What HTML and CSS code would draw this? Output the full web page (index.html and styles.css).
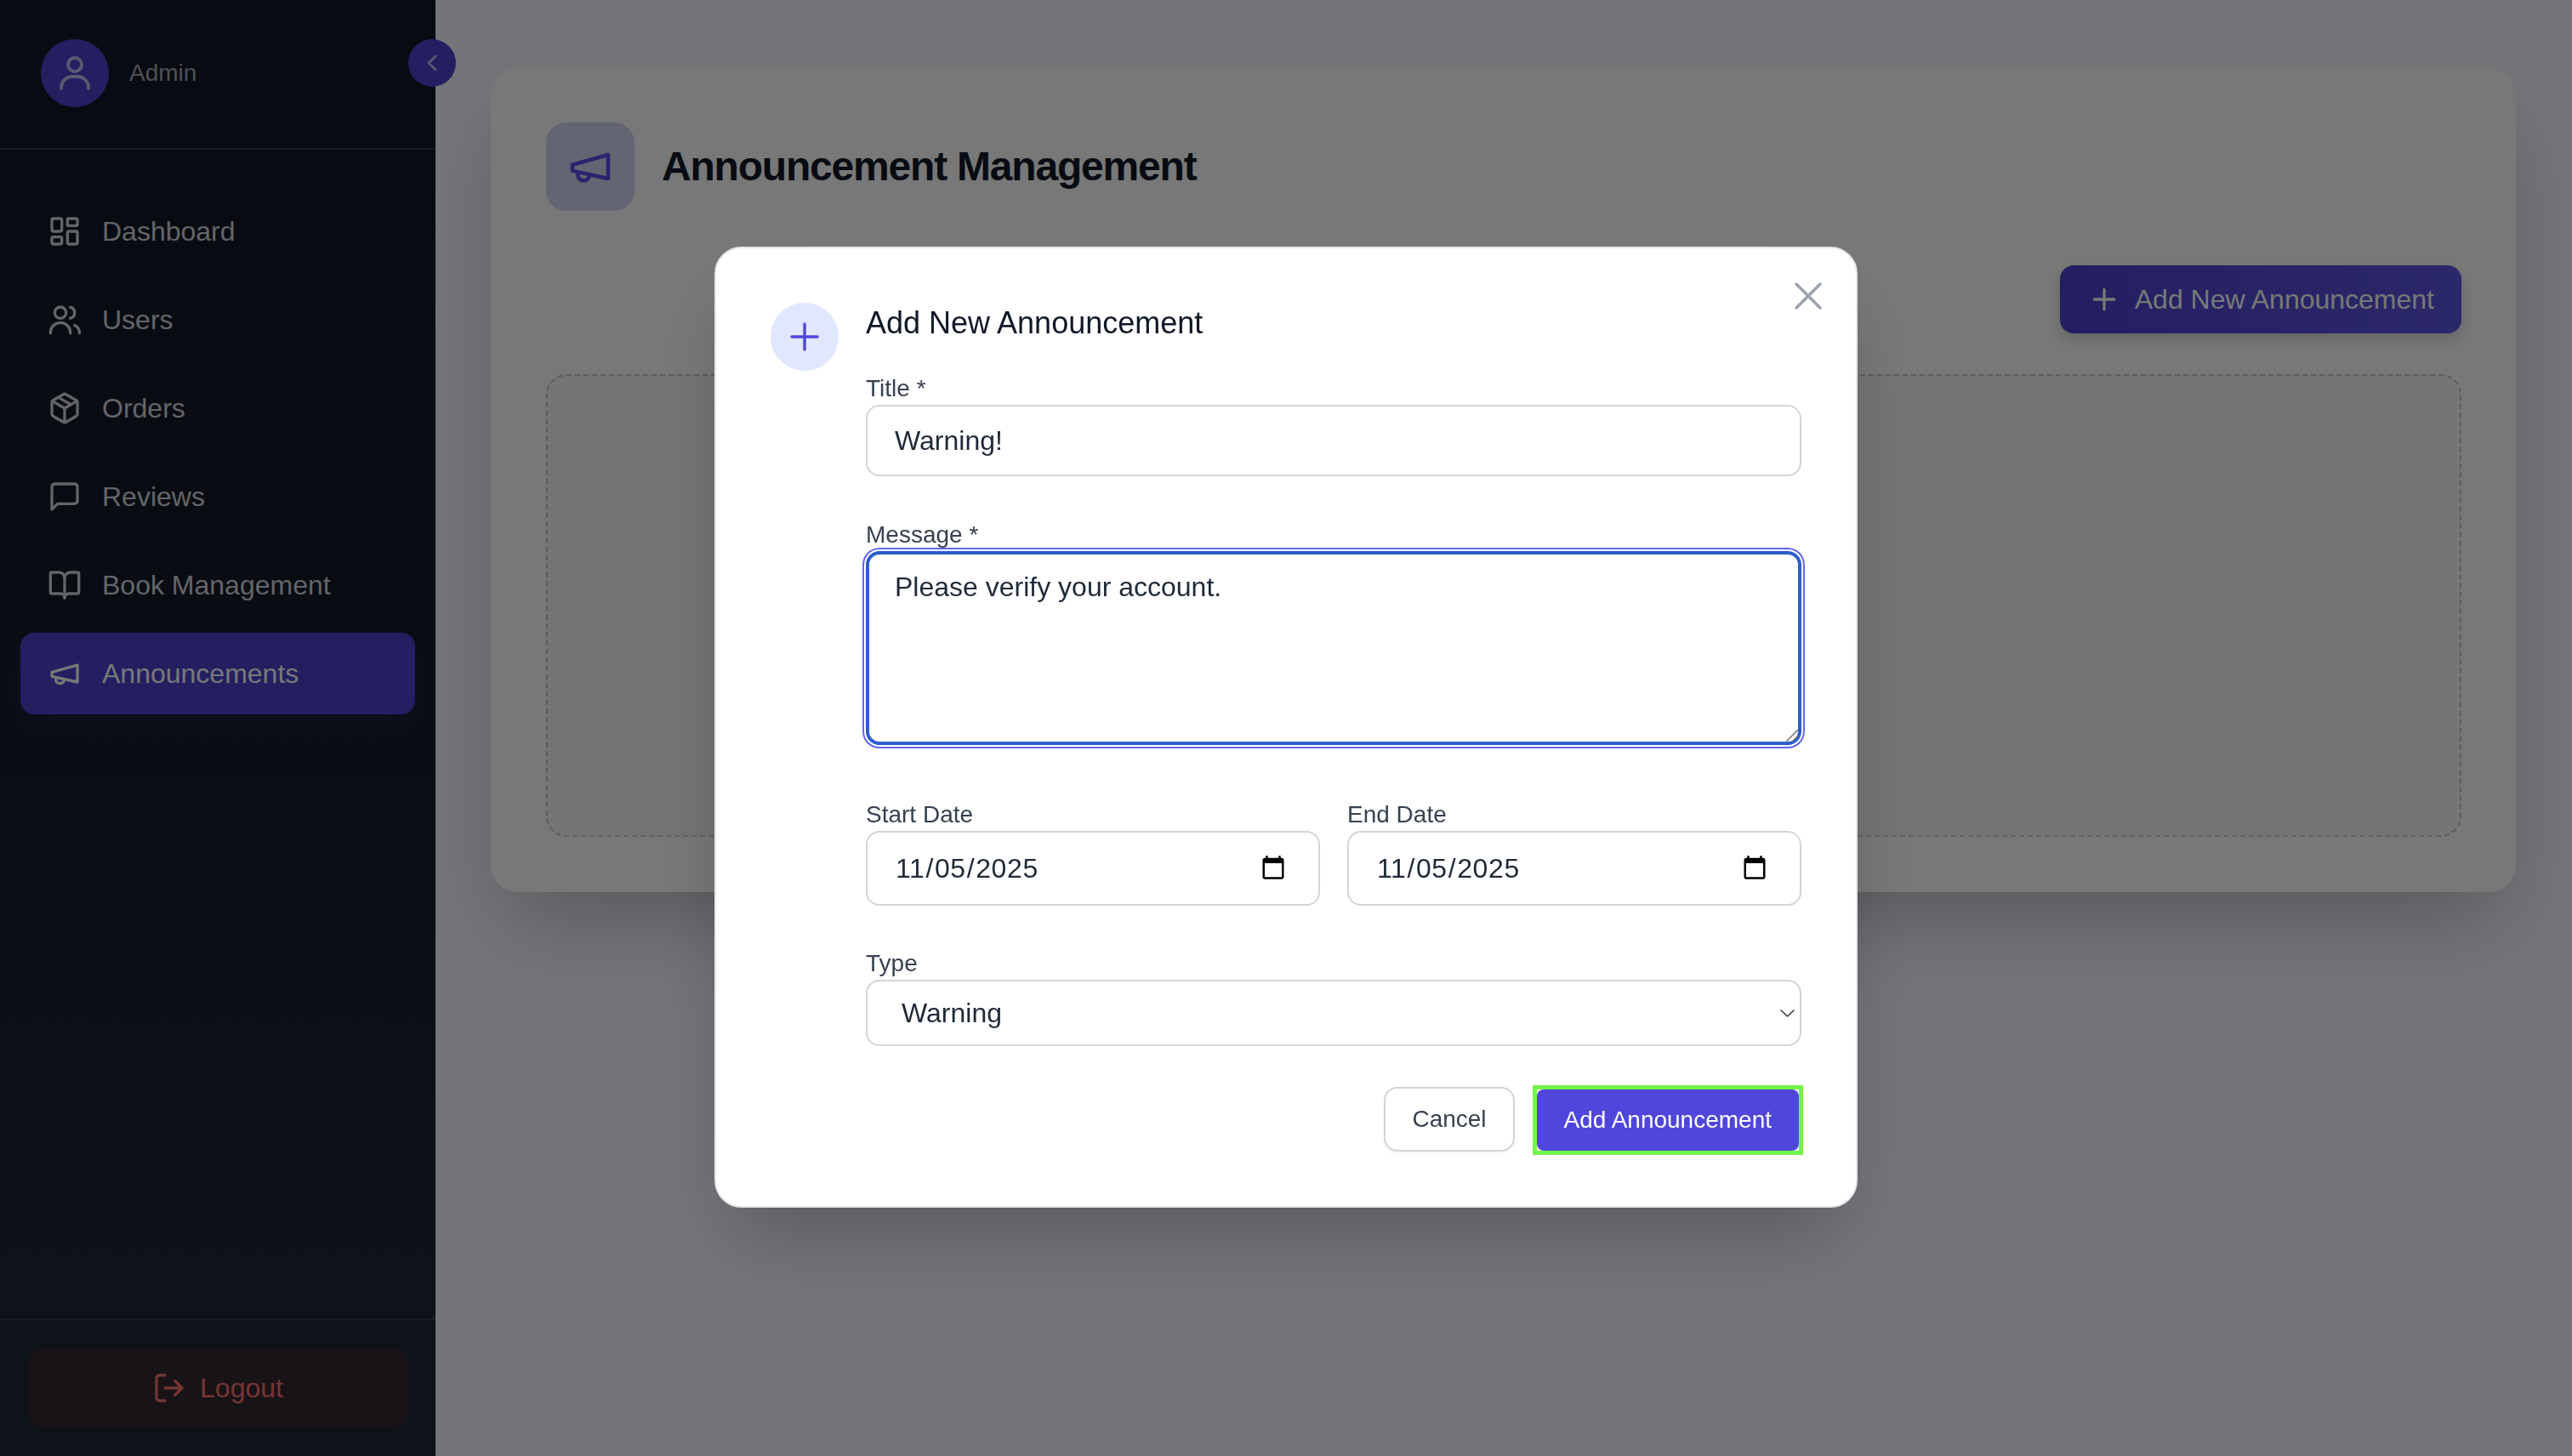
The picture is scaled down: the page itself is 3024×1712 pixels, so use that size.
FILE: index.html
```html
<!DOCTYPE html>
<html lang="en">
<head>
    <meta charset="UTF-8">
    <title>Announcement Management</title>
    <link rel="stylesheet" href="styles.css">
</head>
<body>
    <div class="app">
        <aside class="sidebar">
            <div class="sidebar-head">
                <div class="avatar">
                    <svg class="icon-avatar" viewBox="0 0 24 24"><circle cx="12" cy="7" r="4"/><path d="M4 21v-.5a6.5 6.5 0 0 1 6.5-6.5h3a6.5 6.5 0 0 1 6.5 6.5v.5"/></svg>
                </div>
                <span class="admin-name">Admin</span>
            </div>
            <button class="toggle">
                <svg class="icon-chevron" viewBox="0 0 24 24"><path d="m15 18-6-6 6-6"/></svg>
            </button>
            <nav class="nav">
                <a class="nav-item">
                    <svg class="icon" viewBox="0 0 24 24"><rect x="3" y="3" width="7" height="9" rx="1"/><rect x="14" y="3" width="7" height="5" rx="1"/><rect x="14" y="12" width="7" height="9" rx="1"/><rect x="3" y="16" width="7" height="5" rx="1"/></svg>
                    Dashboard
                </a>
                <a class="nav-item">
                    <svg class="icon" viewBox="0 0 24 24"><circle cx="9" cy="7" r="4"/><path d="M2 21.5V21a7 7 0 0 1 14 0v.5"/><path d="M16 3.13a4 4 0 0 1 0 7.75"/><path d="M22.5 21.5c0-2.500-1.500-4.700-3.500-5.600"/></svg>
                    Users
                </a>
                <a class="nav-item">
                    <svg class="icon" viewBox="0 0 24 24"><path d="m7.500 4.270 9 5.150"/><path d="M21 8a2 2 0 0 0-1-1.730l-7-4a2 2 0 0 0-2 0l-7 4A2 2 0 0 0 3 8v8a2 2 0 0 0 1 1.730l7 4a2 2 0 0 0 2 0l7-4A2 2 0 0 0 21 16Z"/><path d="m3.300 7 8.700 5 8.700-5"/><path d="M12 22V12"/></svg>
                    Orders
                </a>
                <a class="nav-item">
                    <svg class="icon" viewBox="0 0 24 24"><path d="M21 15a2 2 0 0 1-2 2H7l-4 4V5a2 2 0 0 1 2-2h14a2 2 0 0 1 2 2z"/></svg>
                    Reviews
                </a>
                <a class="nav-item">
                    <svg class="icon" viewBox="0 0 24 24"><path d="M12 7v14"/><path d="M3 18a1 1 0 0 1-1-1V4a1 1 0 0 1 1-1h5a4 4 0 0 1 4 4 4 4 0 0 1 4-4h5a1 1 0 0 1 1 1v13a1 1 0 0 1-1 1h-6a3 3 0 0 0-3 3 3 3 0 0 0-3-3z"/></svg>
                    Book Management
                </a>
                <a class="nav-item active">
                    <svg class="icon" viewBox="0 0 24 24"><path d="m3 11 18-5v12L3 14v-3z"/><path d="M11.600 16.800a3 3 0 1 1-5.800-1.600"/></svg>
                    Announcements
                </a>
            </nav>
            <div class="sidebar-foot">
                <button class="logout">
                    <svg class="icon" viewBox="0 0 24 24"><path d="M9 21H5a2 2 0 0 1-2-2V5a2 2 0 0 1 2-2h4"/><path d="m16 17 5-5-5-5"/><path d="M21 12H9"/></svg>
                    Logout
                </button>
            </div>
        </aside>

        <main class="main">
            <section class="panel">
                <div class="panel-head">
                    <div class="panel-icon">
                        <svg class="icon-large" viewBox="0 0 24 24"><path d="m3 11 18-5v12L3 14v-3z"/><path d="M11.600 16.800a3 3 0 1 1-5.800-1.600"/></svg>
                    </div>
                    <h1>Announcement Management</h1>
                </div>
                <div class="panel-actions">
                    <button class="add-button">
                        <svg class="icon" viewBox="0 0 24 24"><path d="M5 12h14"/><path d="M12 5v14"/></svg>
                        Add New Announcement
                    </button>
                </div>
                <div class="empty-box"></div>
            </section>
        </main>
    </div>

    <div class="overlay">
        <div class="modal">
            <button class="close">
                <svg class="icon-close" viewBox="0 0 24 24"><path d="M6 18 18 6"/><path d="m6 6 12 12"/></svg>
            </button>
            <div class="modal-head">
                <div class="modal-icon">
                    <svg class="icon-plus" viewBox="0 0 24 24"><path d="M12 4.500v15"/><path d="M19.500 12h-15"/></svg>
                </div>
                <h2>Add New Announcement</h2>
            </div>
            <form class="form">
                <div class="field">
                    <label for="title">Title *</label>
                    <input class="control" id="title" type="text" value="Warning!">
                </div>
                <div class="field field-message">
                    <label for="message">Message *</label>
                    <div class="message-wrap">
                        <textarea class="control message" id="message" rows="4">Please verify your account.</textarea>
                        <svg class="resize-grip" viewBox="0 0 14 14"><path d="M0 14 14 0"/><path d="M7 14l7-7"/></svg>
                    </div>
                </div>
                <div class="date-row">
                    <div class="field">
                        <label for="start">Start Date</label>
                        <input class="control date" id="start" type="date" value="2025-11-05">
                    </div>
                    <div class="field">
                        <label for="end">End Date</label>
                        <input class="control date" id="end" type="date" value="2025-11-05">
                    </div>
                </div>
                <div class="field">
                    <label for="type">Type</label>
                    <div class="select-wrap">
                        <select class="control select" id="type">
                            <option>Warning</option>
                        </select>
                        <svg class="select-arrow" viewBox="0 0 17 9"><path d="M1 1l7.500 7L16 1"/></svg>
                    </div>
                </div>
                <div class="form-actions">
                    <button class="cancel" type="button">Cancel</button>
                    <div class="submit-frame">
                        <button class="submit" type="button">Add Announcement</button>
                    </div>
                </div>
            </form>
        </div>
    </div>
</body>
</html>
```

FILE: styles.css
```css
/* Base */
* {
    box-sizing: border-box;
}

body {
    margin: 0;
    height: 1712px;
    overflow: hidden;
    font-family: "Liberation Sans", Arial, sans-serif;
    background-color: #f6f8ff;
    color: #111827;
}

button {
    font-family: inherit;
    border: none;
    cursor: pointer;
}

svg {
    fill: none;
    stroke: currentColor;
    stroke-width: 2;
    stroke-linecap: round;
    stroke-linejoin: round;
    flex-shrink: 0;
}

.icon {
    width: 40px;
    height: 40px;
}

.app {
    display: flex;
    height: 1712px;
}

/* Sidebar */
.sidebar {
    position: relative;
    display: flex;
    flex-direction: column;
    width: 512px;
    flex-shrink: 0;
    background: linear-gradient(to bottom, #141828, #171c2a 50%, #212b3a);
}

.sidebar-head {
    display: flex;
    align-items: center;
    gap: 24px;
    height: 176px;
    padding: 0 48px 2px;
    border-bottom: 2px solid #32384a;
}

.avatar {
    display: flex;
    align-items: center;
    justify-content: center;
    width: 80px;
    height: 80px;
    border-radius: 50%;
    background-color: #4c42cf;
    color: #fff;
}

.icon-avatar {
    width: 48px;
    height: 48px;
    opacity: 0.65;
}

.admin-name {
    font-size: 28px;
    color: #a9abb6;
}

.toggle {
    position: absolute;
    top: 46px;
    right: -24px;
    display: flex;
    align-items: center;
    justify-content: center;
    width: 56px;
    height: 56px;
    padding: 0;
    border-radius: 50%;
    background-color: #4c42cf;
    color: #fff;
    z-index: 2;
}

.icon-chevron {
    width: 32px;
    height: 32px;
    opacity: 0.65;
}

.nav {
    flex: 1;
    display: flex;
    flex-direction: column;
    gap: 8px;
    padding: 48px 24px;
}

.nav-item {
    display: flex;
    align-items: center;
    gap: 24px;
    height: 96px;
    padding: 0 32px;
    border-radius: 16px;
    font-size: 32px;
    color: #d4d6da;
}

.nav-item.active {
    background-color: #4c42cf;
    color: #fff;
    box-shadow: 0 16px 32px rgba(82, 70, 220, 0.12);
}

.sidebar-foot {
    padding: 32px;
    border-top: 2px solid #353b49;
}

.logout {
    display: flex;
    align-items: center;
    justify-content: center;
    gap: 16px;
    width: 100%;
    height: 96px;
    border-radius: 20px;
    background-color: #332a30;
    color: #f87171;
    font-size: 32px;
}

/* Main area */
.main {
    flex: 1;
    padding: 80px 66px 80px 65px;
}

.panel {
    padding: 64px 64px 65px 65px;
    border-radius: 32px;
    background-color: #fdfffc;
    box-shadow: 0 50px 100px -24px rgba(0, 0, 0, 0.25);
}

.panel-head {
    display: flex;
    align-items: center;
    gap: 32px;
    margin-bottom: 64px;
}

.panel-icon {
    display: flex;
    align-items: center;
    justify-content: center;
    width: 104px;
    height: 104px;
    border-radius: 24px;
    background-color: #d4d6f2;
    color: #5a50e8;
}

.icon-large {
    width: 56px;
    height: 56px;
}

h1 {
    margin: 0;
    font-size: 48px;
    line-height: 64px;
    font-weight: bold;
    letter-spacing: -1.2px;
}

.panel-actions {
    display: flex;
    justify-content: flex-end;
    margin-bottom: 48px;
}

.add-button {
    display: flex;
    align-items: center;
    gap: 16px;
    height: 80px;
    padding: 0 32px;
    border-radius: 16px;
    background: linear-gradient(to right, #4c42cf, #5c56e0);
    color: #fff;
    font-size: 32px;
    box-shadow: 0 8px 16px rgba(0, 0, 0, 0.15);
}

.empty-box {
    height: 544px;
    border: 2px dashed #c4c6c6;
    border-radius: 24px;
    background-color: #f7f9f6;
}

/* Modal */
.overlay {
    position: fixed;
    top: 0;
    left: 0;
    width: 100%;
    height: 100%;
    display: flex;
    align-items: center;
    justify-content: center;
    padding-bottom: 2px;
    background-color: rgba(0, 0, 0, 0.53);
    z-index: 10;
}

.modal {
    position: relative;
    width: 1344px;
    padding: 64px;
    border: 2px solid #e5e7eb;
    border-radius: 32px;
    background-color: #fff;
    box-shadow: 0 50px 100px -24px rgba(0, 0, 0, 0.25);
}

.close {
    position: absolute;
    top: 28px;
    right: 28px;
    display: flex;
    width: 56px;
    height: 56px;
    padding: 0;
    background: none;
    color: #9ca3af;
}

.icon-close {
    width: 56px;
    height: 56px;
    stroke-width: 1.500;
}

.modal-head {
    display: flex;
    align-items: flex-start;
    gap: 32px;
    height: 80px;
}

.modal-icon {
    display: flex;
    align-items: center;
    justify-content: center;
    width: 80px;
    height: 80px;
    border-radius: 50%;
    background-color: #e0e7ff;
    color: #4f46dc;
}

.icon-plus {
    width: 48px;
    height: 48px;
    stroke-width: 1.700;
}

h2 {
    margin: 0;
    font-size: 36px;
    line-height: 48px;
    font-weight: normal;
    color: #111827;
}

/* Form */
.form {
    margin-left: 112px;
}

.field {
    margin-bottom: 48px;
    min-width: 0;
}

.field-message {
    margin-bottom: 61px;
}

label {
    display: block;
    height: 40px;
    font-size: 28px;
    line-height: 42px;
    color: #374151;
}

.control {
    display: block;
    width: 100%;
    height: 84px;
    padding: 16px 32px;
    border: 2px solid #d1d5db;
    border-radius: 16px;
    background-color: #fff;
    font-family: inherit;
    font-size: 32px;
    line-height: 48px;
    color: #1f2937;
    outline: none;
}

.message-wrap {
    position: relative;
}

.message {
    height: 228px;
    padding: 14px 30px;
    border: 4px solid #2b5fcb;
    box-shadow: 0 0 0 2px #fff, 0 0 0 4px #6366f1;
    resize: none;
}

.resize-grip {
    position: absolute;
    right: 4px;
    bottom: 4px;
    width: 14px;
    height: 14px;
    stroke: #77787a;
    stroke-width: 1.500;
    stroke-linecap: butt;
    pointer-events: none;
}

.date-row {
    display: grid;
    grid-template-columns: 1fr 1fr;
    gap: 32px;
}

.date-row .field {
    margin-bottom: 47px;
}

.date {
    height: 88px;
    padding-right: 35px;
    letter-spacing: 0.6px;
}

.select-wrap {
    position: relative;
}

.select {
    height: 78px;
    padding: 0 40px;
    appearance: none;
}

.select-arrow {
    position: absolute;
    top: 35px;
    right: 8px;
    width: 17px;
    height: 9px;
    stroke: #30343c;
    stroke-width: 1.500;
    pointer-events: none;
}

.form-actions {
    display: flex;
    justify-content: flex-end;
    align-items: flex-start;
    gap: 21px;
}

.cancel {
    height: 76px;
    padding: 0 31px;
    border: 2px solid #d1d5db;
    border-radius: 16px;
    background-color: #fff;
    font-size: 28px;
    color: #374151;
    box-shadow: 0 2px 4px rgba(0, 0, 0, 0.05);
}

.submit-frame {
    margin: -2px -2px -4px 0;
    border: 5px solid #73f64b;
    background-color: #fff;
}

.submit {
    display: block;
    height: 72px;
    padding: 0 32px;
    border-radius: 8px;
    background-color: #4f46dc;
    font-size: 28px;
    color: #fff;
}
```
